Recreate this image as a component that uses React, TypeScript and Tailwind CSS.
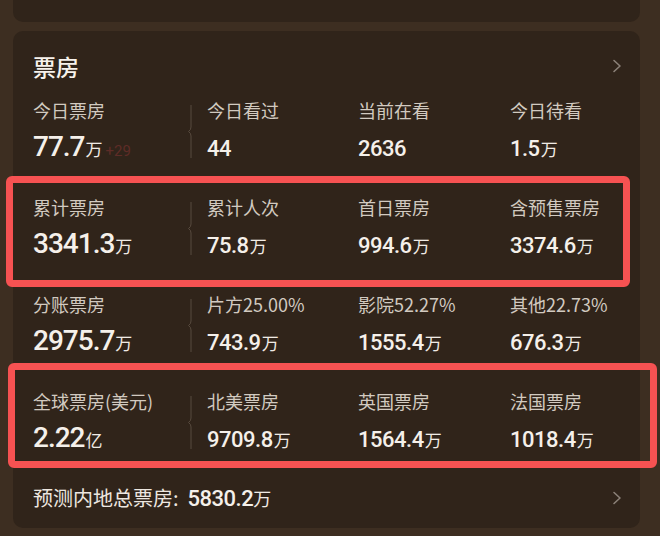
import React from 'react';

type Cell = { label: string; value: string; unit?: string; extra?: string };

const rows: Cell[][] = [
  [
    { label: '今日票房', value: '77.7', unit: '万', extra: '+29' },
    { label: '今日看过', value: '44' },
    { label: '当前在看', value: '2636' },
    { label: '今日待看', value: '1.5', unit: '万' },
  ],
  [
    { label: '累计票房', value: '3341.3', unit: '万' },
    { label: '累计人次', value: '75.8', unit: '万' },
    { label: '首日票房', value: '994.6', unit: '万' },
    { label: '含预售票房', value: '3374.6', unit: '万' },
  ],
  [
    { label: '分账票房', value: '2975.7', unit: '万' },
    { label: '片方25.00%', value: '743.9', unit: '万' },
    { label: '影院52.27%', value: '1555.4', unit: '万' },
    { label: '其他22.73%', value: '676.3', unit: '万' },
  ],
  [
    { label: '全球票房(美元)', value: '2.22', unit: '亿' },
    { label: '北美票房', value: '9709.8', unit: '万' },
    { label: '英国票房', value: '1564.4', unit: '万' },
    { label: '法国票房', value: '1018.4', unit: '万' },
  ],
];

const cjk = "font-['Noto_Sans_CJK_SC',sans-serif]";
const num = "font-['Roboto','Noto_Sans_CJK_SC',sans-serif]";

function Chevron() {
  return (
    <svg width="10" height="14" viewBox="0 0 10 14" fill="none">
      <polyline points="2,1.5 8,7 2,12.5" stroke="#8b8178" strokeWidth="1.6" strokeLinecap="round" strokeLinejoin="round" />
    </svg>
  );
}

function Divider() {
  return (
    <svg width="6" height="53" viewBox="0 0 6 53" fill="none" className="mt-[7px]">
      <path d="M4 0 V22 Q4 25 1.5 26.5 Q4 28 4 31 V53" stroke="#574a3e" strokeWidth="1" />
    </svg>
  );
}

function Value({ cell, big }: { cell: Cell; big?: boolean }) {
  return (
    <div className={`flex items-baseline h-[34px] leading-[34px] ${big ? '' : 'pt-[2px]'}`}>
      <span className={`${num} font-medium text-[#f5f0ea] ${big ? 'text-[28px] tracking-[-1px]' : 'text-[22px] tracking-[-0.5px]'}`}>
        {cell.value}
      </span>
      {cell.unit && <span className={`${cjk} text-[17px] text-[#f0ebe5] ml-[1px]`}>{cell.unit}</span>}
      {cell.extra && <span className={`${num} text-[15px] text-[#5e2c27] ml-[3px]`}>{cell.extra}</span>}
    </div>
  );
}

function Column({ cell, big, width }: { cell: Cell; big?: boolean; width: string }) {
  return (
    <div className={`flex flex-col ${width}`}>
      <div className={`${cjk} text-[18px] leading-[24px] text-[#d2cac0] whitespace-nowrap`}>{cell.label}</div>
      <div className="h-[8px]" />
      <Value cell={cell} big={big} />
    </div>
  );
}

export default function App() {
  return (
    <div className="w-[660px] h-[536px] overflow-hidden bg-[#3d2e21] pl-[13px] pr-[20px] relative">
      <div className="h-[22px] bg-[#30241a] rounded-b-[10px]" />
      <div className="mt-[9px] h-[497px] bg-[#30241a] rounded-[10px] pl-[20px] pr-[18px] pt-[20px]">
        <div className="flex items-center justify-between h-[30px]">
          <span className={`${cjk} text-[23px] font-medium text-[#f7f2ec]`}>票房</span>
          <Chevron />
        </div>
        <div className="h-[17px]" />
        {rows.map((row, i) => (
          <div key={i} className="flex h-[97px]">
            <Column cell={row[0]} big width="w-[154px]" />
            <div className="w-[20px]">
              <Divider />
            </div>
            <Column cell={row[1]} width="w-[151px]" />
            <Column cell={row[2]} width="w-[152px]" />
            <Column cell={row[3]} width="flex-1" />
          </div>
        ))}
        <div className="flex items-center justify-between h-[24px]">
          <div className="flex items-baseline">
            <span className={`${cjk} text-[20px] text-[#ede7e0]`}>预测内地总票房:</span>
            <span className={`${num} font-medium text-[22px] text-[#f5f0ea] ml-[9px] tracking-[-0.5px]`}>5830.2</span>
            <span className={`${cjk} text-[18px] text-[#f0ebe5]`}>万</span>
          </div>
          <Chevron />
        </div>
      </div>

      {/* annotation boxes */}
      <div className="absolute left-[6px] top-[176px] w-[624px] h-[111px] border-[7px] border-[#f65252] rounded-[6px]" />
      <div className="absolute left-[8px] top-[363px] w-[649px] h-[105px] border-[7px] border-[#f65252] rounded-[6px]" />
    </div>
  );
}
